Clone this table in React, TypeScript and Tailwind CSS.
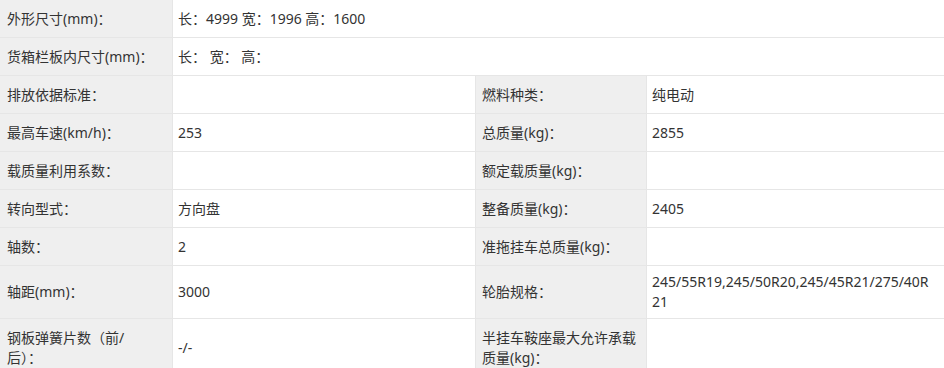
import React from "react";

const font = {
  fontFamily: '"Noto Sans", "Noto Sans CJK SC", sans-serif',
};

function Label({ children, w }: { children?: React.ReactNode; w: string }) {
  return (
    <div
      className={`${w} shrink-0 flex items-center bg-[#efefef] border-r border-[#e6e6e6] pl-[7px] pr-2 leading-[20px]`}
    >
      <span>{children}</span>
    </div>
  );
}

function Value({ children, w }: { children?: React.ReactNode; w: string }) {
  return (
    <div
      className={`${w} flex items-center bg-white pl-[5px] pr-1 leading-[20px]`}
    >
      <span>{children}</span>
    </div>
  );
}

function FullRow({ label, value }: { label: string; value: string }) {
  return (
    <div className="flex h-[38px] border-b border-[#e6e6e6]">
      <Label w="w-[173px]">{label}</Label>
      <Value w="flex-1">{value}</Value>
    </div>
  );
}

function HalfRow({
  l1,
  v1,
  l2,
  v2,
  h = "h-[38px]",
}: {
  l1: React.ReactNode;
  v1?: React.ReactNode;
  l2: React.ReactNode;
  v2?: React.ReactNode;
  h?: string;
}) {
  return (
    <div className={`flex ${h} shrink-0 border-b border-[#e6e6e6]`}>
      <Label w="w-[173px]">{l1}</Label>
      <div className="w-[303px] shrink-0 flex items-center bg-white border-r border-[#e6e6e6] pl-[5px] leading-[20px]">
        <span>{v1}</span>
      </div>
      <div className="w-[171px] shrink-0 flex items-center bg-[#efefef] border-r border-[#e6e6e6] pl-[6px] leading-[20px]">
        <span>{l2}</span>
      </div>
      <Value w="flex-1">{v2}</Value>
    </div>
  );
}

export default function App() {
  return (
    <div
      className="w-[944px] h-[368px] overflow-hidden bg-white text-[14px] text-[#333]"
      style={font}
    >
      <FullRow label="外形尺寸(mm)：" value="长：4999 宽：1996 高：1600" />
      <FullRow label="货箱栏板内尺寸(mm)：" value="长： 宽： 高：" />
      <HalfRow l1="排放依据标准：" l2="燃料种类：" v2="纯电动" />
      <HalfRow l1="最高车速(km/h)：" v1="253" l2="总质量(kg)：" v2="2855" />
      <HalfRow l1="载质量利用系数：" l2="额定载质量(kg)：" />
      <HalfRow l1="转向型式：" v1="方向盘" l2="整备质量(kg)：" v2="2405" />
      <HalfRow l1="轴数：" v1="2" l2="准拖挂车总质量(kg)：" />
      <HalfRow
        h="h-[53px]"
        l1="轴距(mm)："
        v1="3000"
        l2="轮胎规格："
        v2={
          <>
            245/55R19,245/50R20,245/45R21/275/40R
            <br />
            21
          </>
        }
      />
      <HalfRow
        h="h-[58px]"
        l1={
          <>
            钢板弹簧片数（前/
            <br />
            后）：
          </>
        }
        v1="-/-"
        l2={
          <>
            半挂车鞍座最大允许承载
            <br />
            质量(kg)：
          </>
        }
      />
    </div>
  );
}
